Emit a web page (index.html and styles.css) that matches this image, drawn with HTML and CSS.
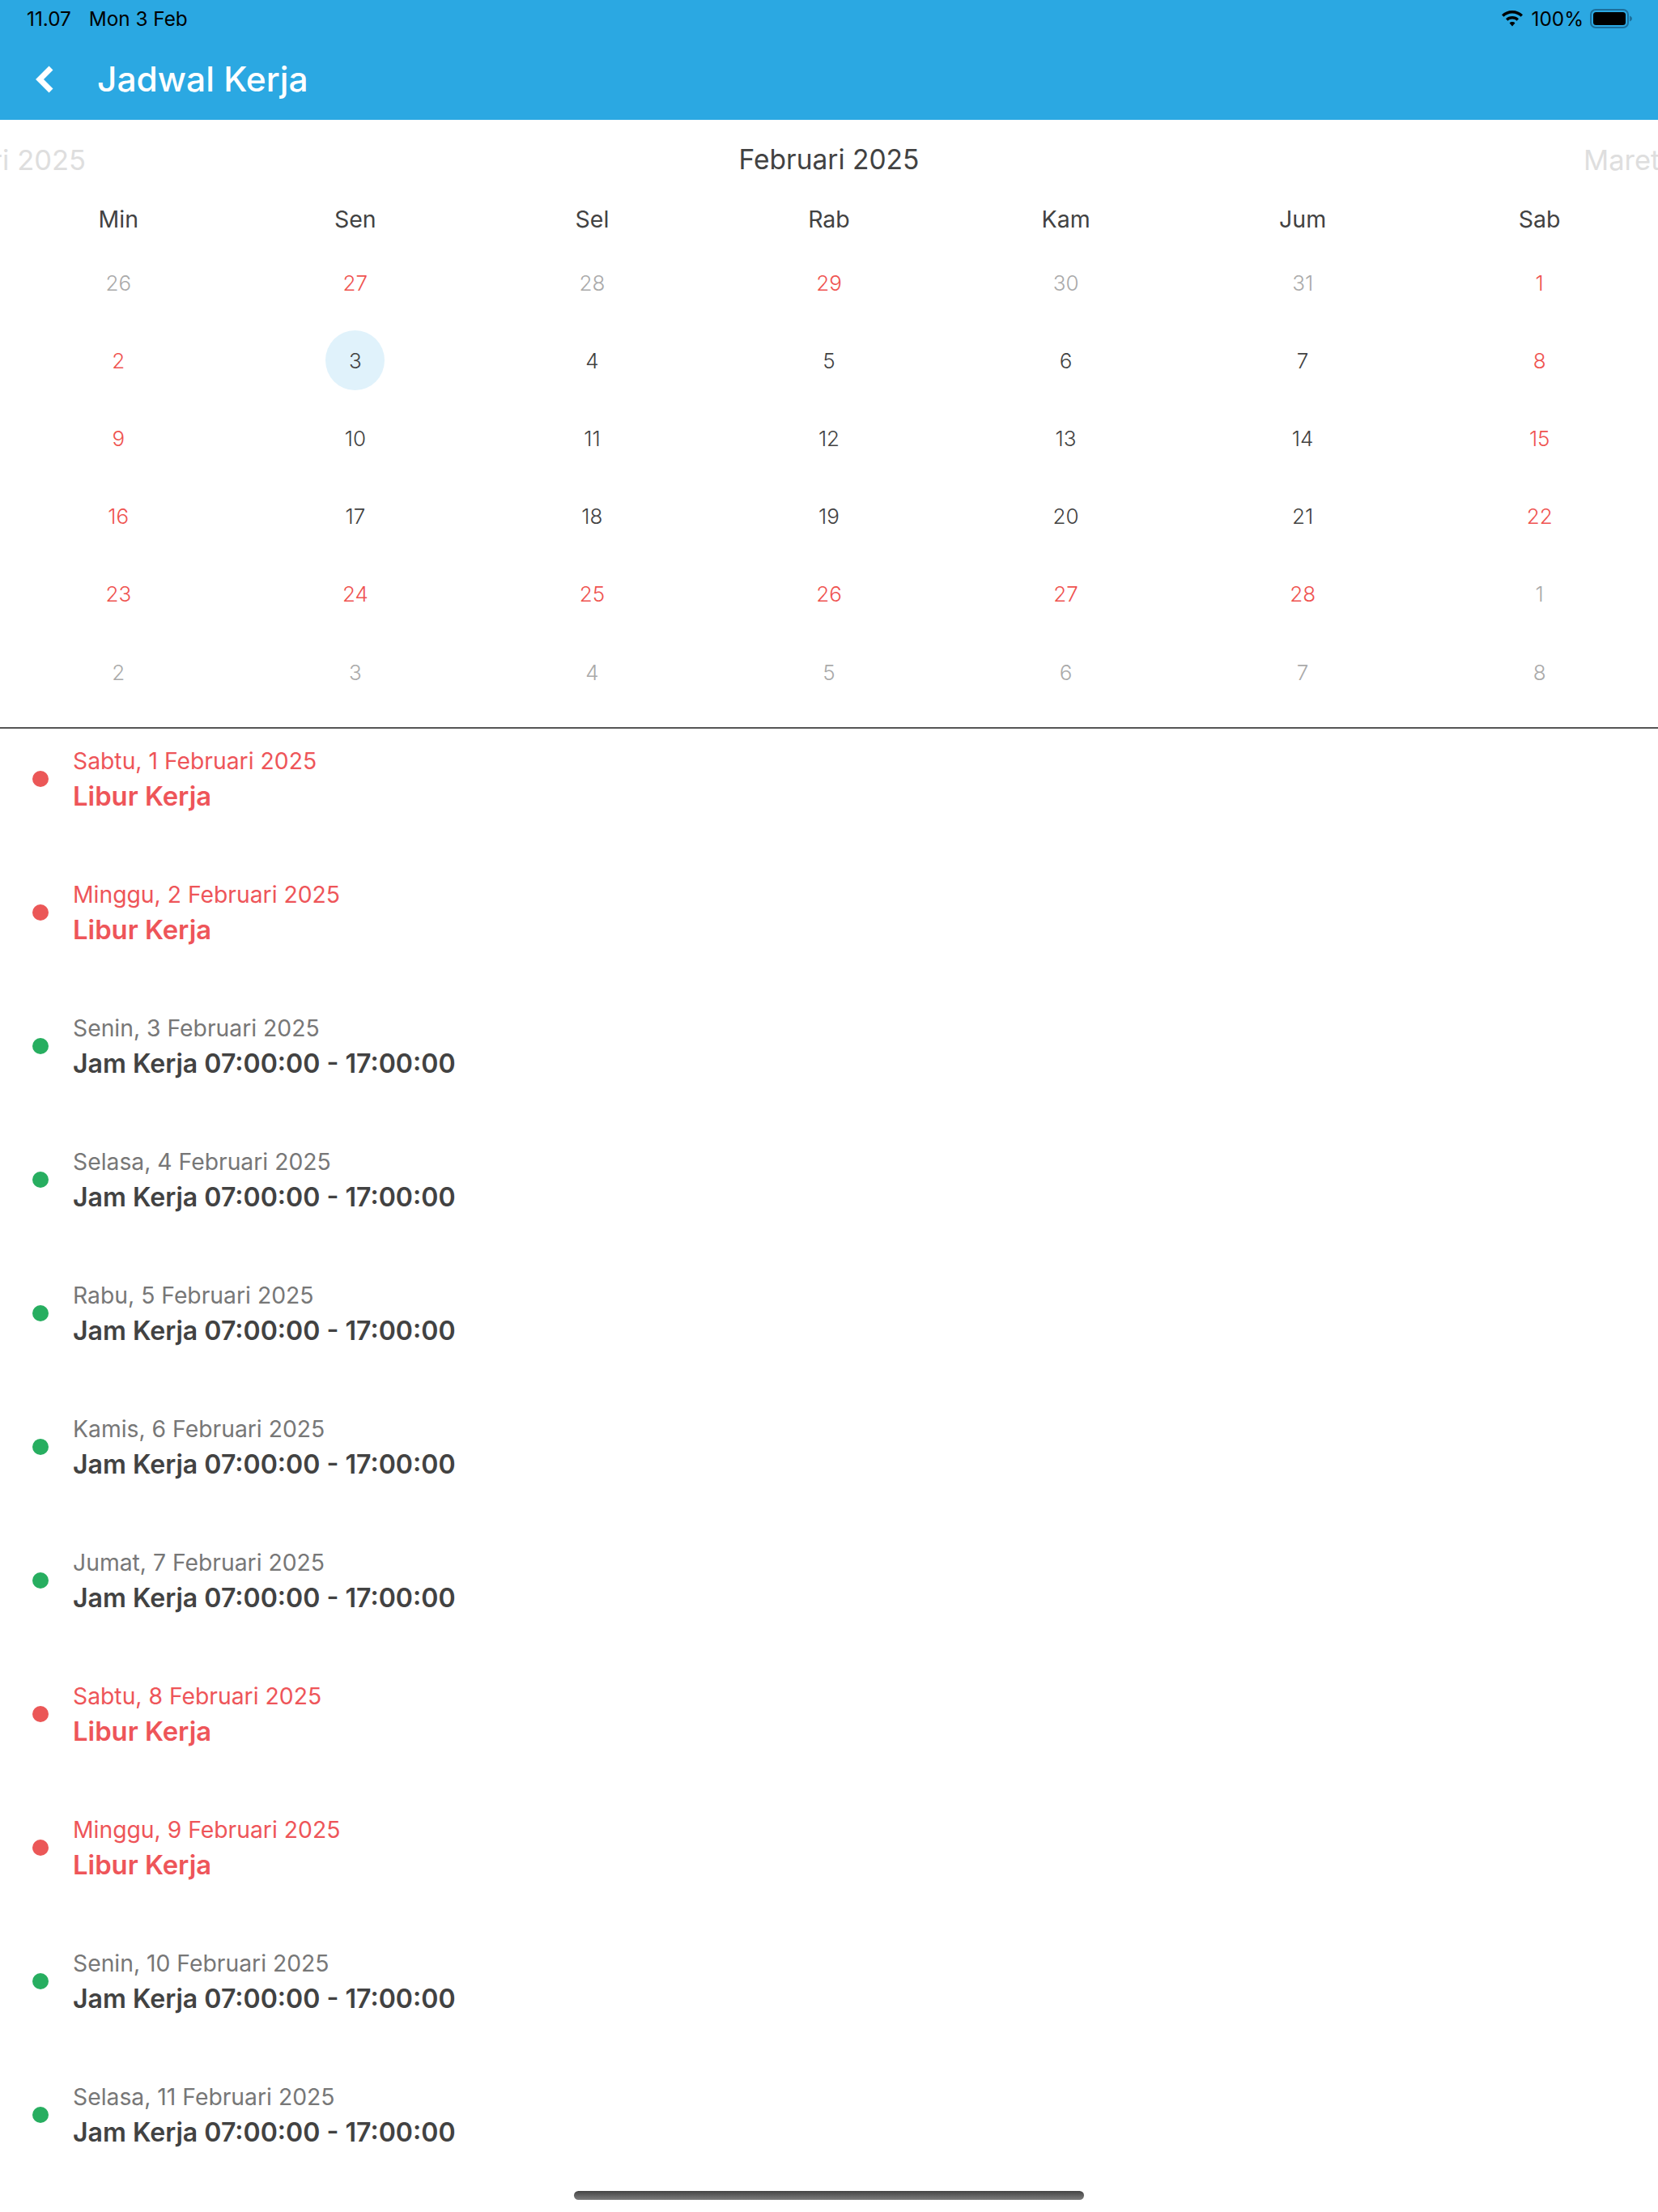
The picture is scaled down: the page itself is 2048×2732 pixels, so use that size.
FILE: index.html
```html
<!DOCTYPE html>
<html lang="id">
<head>
<meta charset="utf-8">
<title>Jadwal Kerja</title>
<link rel="stylesheet" href="styles.css">
</head>
<body>
<div class="page">
  <header class="header">
    <div class="status">
      <div class="status-left"><span>11.07</span><span>Mon 3 Feb</span></div>
      <div class="status-right">
        <svg class="wifi" width="28" height="22" viewBox="0 0 28 22"><path d="M14 1C8.800 1 4.300 3 1 6.200L3.400 8.800C6.100 6.200 9.900 4.600 14 4.600S21.900 6.200 24.600 8.800L27 6.200C23.700 3 19.200 1 14 1Z"/><path d="M14 8C10.900 8 8.100 9.200 6 11.200L8.400 13.800C9.900 12.400 11.800 11.600 14 11.600S18.100 12.400 19.600 13.800L22 11.200C19.900 9.200 17.100 8 14 8Z"/><path d="M14 15C12.700 15 11.500 15.500 10.600 16.400L14 20.500L17.400 16.400C16.500 15.500 15.300 15 14 15Z"/></svg>
        <span>100%</span>
        <svg class="battery" width="54" height="24" viewBox="0 0 54 24"><rect x="1" y="1" width="46" height="22" rx="6" fill="none" stroke="#1c6f9c" stroke-width="2"/><rect x="4" y="4" width="40" height="16" rx="3.500" fill="#000"/><path d="M49 8.500C51 9.500 52 10.500 52 12S51 14.500 49 15.500Z" fill="#1c6f9c"/></svg>
      </div>
    </div>
    <div class="appbar">
      <svg class="back" width="30" height="36" viewBox="0 0 30 36"><path d="M22 4L8 18L22 32" fill="none" stroke="#fff" stroke-width="7"/></svg>
      <h1 class="title">Jadwal Kerja</h1>
    </div>
  </header>

  <section class="calendar">
    <div class="months">
      <div class="peek peek-left"><span>Januari 2025</span></div>
      <div class="month">Februari 2025</div>
      <div class="peek peek-right"><span>Maret 2025</span></div>
    </div>
    <div class="grid weekdays">
      <div>Min</div><div>Sen</div><div>Sel</div><div>Rab</div><div>Kam</div><div>Jum</div><div>Sab</div>
    </div>
    <div class="grid days">
      <div class="muted">26</div><div class="red">27</div><div class="muted">28</div><div class="red">29</div><div class="muted">30</div><div class="muted">31</div><div class="red">1</div>
      <div class="red">2</div><div><span class="today">3</span></div><div>4</div><div>5</div><div>6</div><div>7</div><div class="red">8</div>
      <div class="red">9</div><div>10</div><div>11</div><div>12</div><div>13</div><div>14</div><div class="red">15</div>
      <div class="red">16</div><div>17</div><div>18</div><div>19</div><div>20</div><div>21</div><div class="red">22</div>
      <div class="red">23</div><div class="red">24</div><div class="red">25</div><div class="red">26</div><div class="red">27</div><div class="red">28</div><div class="muted">1</div>
      <div class="muted">2</div><div class="muted">3</div><div class="muted">4</div><div class="muted">5</div><div class="muted">6</div><div class="muted">7</div><div class="muted">8</div>
    </div>
  </section>

  <ul class="list">
    <li class="item off"><i class="dot"></i><div><p class="date">Sabtu, 1 Februari 2025</p><p class="shift">Libur Kerja</p></div></li>
    <li class="item off"><i class="dot"></i><div><p class="date">Minggu, 2 Februari 2025</p><p class="shift">Libur Kerja</p></div></li>
    <li class="item"><i class="dot"></i><div><p class="date">Senin, 3 Februari 2025</p><p class="shift">Jam Kerja 07:00:00 - 17:00:00</p></div></li>
    <li class="item"><i class="dot"></i><div><p class="date">Selasa, 4 Februari 2025</p><p class="shift">Jam Kerja 07:00:00 - 17:00:00</p></div></li>
    <li class="item"><i class="dot"></i><div><p class="date">Rabu, 5 Februari 2025</p><p class="shift">Jam Kerja 07:00:00 - 17:00:00</p></div></li>
    <li class="item"><i class="dot"></i><div><p class="date">Kamis, 6 Februari 2025</p><p class="shift">Jam Kerja 07:00:00 - 17:00:00</p></div></li>
    <li class="item"><i class="dot"></i><div><p class="date">Jumat, 7 Februari 2025</p><p class="shift">Jam Kerja 07:00:00 - 17:00:00</p></div></li>
    <li class="item off"><i class="dot"></i><div><p class="date">Sabtu, 8 Februari 2025</p><p class="shift">Libur Kerja</p></div></li>
    <li class="item off"><i class="dot"></i><div><p class="date">Minggu, 9 Februari 2025</p><p class="shift">Libur Kerja</p></div></li>
    <li class="item"><i class="dot"></i><div><p class="date">Senin, 10 Februari 2025</p><p class="shift">Jam Kerja 07:00:00 - 17:00:00</p></div></li>
    <li class="item"><i class="dot"></i><div><p class="date">Selasa, 11 Februari 2025</p><p class="shift">Jam Kerja 07:00:00 - 17:00:00</p></div></li>
  </ul>
  <div class="home"></div>
</div>
</body>
</html>
```
FILE: styles.css
```css
* { box-sizing: border-box; }
html, body { margin: 0; padding: 0; }
body { font-family: Inter, "Open Sans", sans-serif; color: #424242; background: #fff; }
.page { position: relative; width: 2048px; height: 2732px; overflow: hidden; }

.header { height: 148px; background: #2ba8e2; display: flex; flex-direction: column; }
.status { height: 46px; padding: 0 30px 0 33px; display: flex; justify-content: space-between; align-items: center; font-family: Inter, sans-serif; font-size: 24.300px; color: #000; }
.status-left { display: flex; gap: 22px; }
.status-right { display: flex; align-items: center; gap: 8px; }
.wifi { margin-right: 2px; }
.appbar { flex: 1; display: flex; align-items: center; padding: 2px 0 0 41px; }
.back { display: block; margin-right: 49px; }
.title { margin: 0; font-size: 42.500px; font-weight: 500; color: #fff; line-height: 1; }

.calendar { border-bottom: 2px solid #555; height: 752px; }
.months { height: 98px; display: flex; align-items: center; font-size: 33.500px; font-weight: 400; }
.month { flex: 1; text-align: center; padding-right: 14px; }
.peek { width: 106px; overflow: hidden; white-space: nowrap; display: flex; color: #dedede; font-size: 34.500px; }
.peek-left { justify-content: flex-end; }
.peek-right { width: 92px; }
.peek span { flex: none; }
.grid { display: grid; grid-template-columns: repeat(7, 1fr); text-align: center; }
.weekdays { height: 55px; padding-bottom: 7px; font-size: 28.500px; align-items: center; }
.days { grid-auto-rows: 96.200px; font-size: 26px; font-weight: 300; align-items: center; justify-items: center; }
.muted { color: #aaa; }
.red { color: #ef5350; }
.today { display: flex; width: 73px; height: 74px; border-radius: 50%; background: #e0f2fb; align-items: center; justify-content: center; }

.list { list-style: none; margin: 0; padding: 0; display: flex; flex-direction: column; gap: 41px; }
.item { height: 124px; display: flex; align-items: center; padding-left: 40px; color: #424242; }
.dot { width: 20px; height: 20px; border-radius: 50%; background: #27ae60; margin-right: 30px; flex: none; }
.date { margin: 0; font-size: 28.300px; line-height: 43px; color: #777; }
.shift { margin: 0; font-size: 32.100px; line-height: 43px; font-weight: 600; color: #424242; }
.off .dot { background: #eb5757; }
.off .date, .off .shift { color: #ee5559; }
.off .shift { font-size: 32.800px; }

.home { position: absolute; left: 709px; top: 2706px; width: 630px; height: 11px; border-radius: 6px; background: linear-gradient(180deg, #444, #7d7d7d); }
```
